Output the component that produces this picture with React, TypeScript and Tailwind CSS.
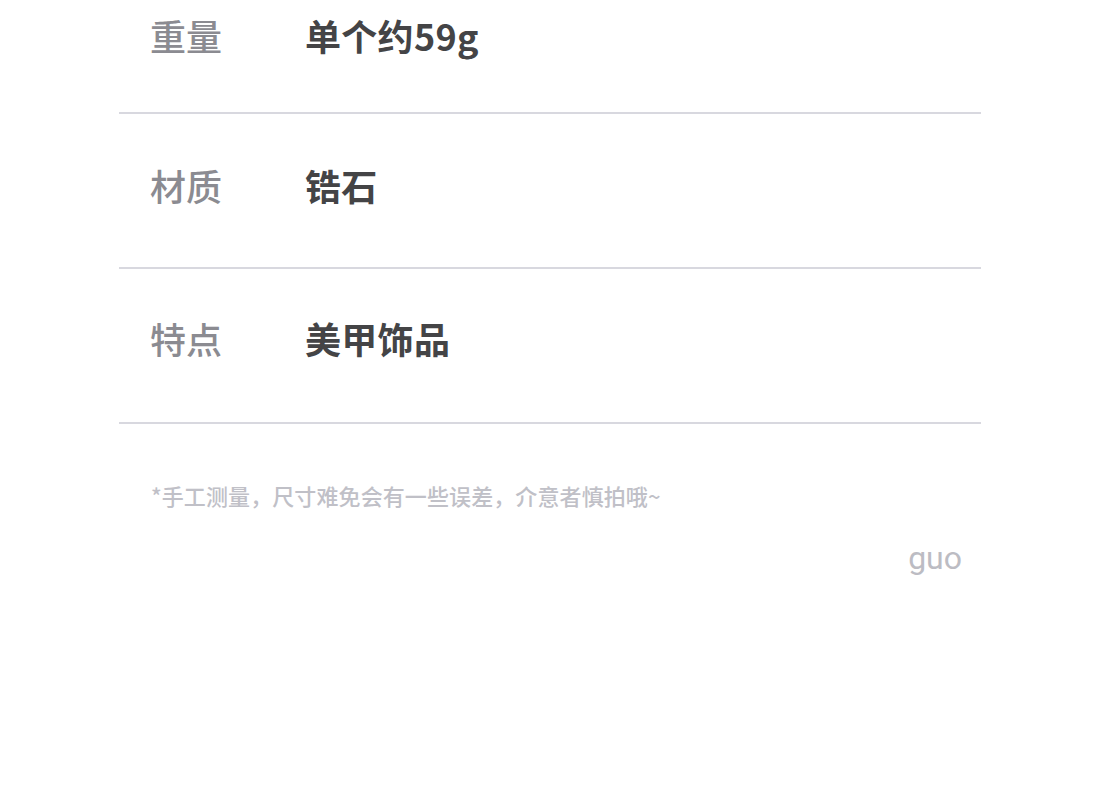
import React from "react";

const rows = [
  { label: "重量", value: "单个约59g", pad: "pt-[58px]" },
  { label: "材质", value: "锆石", pad: "pt-[53px]" },
  { label: "特点", value: "美甲饰品", pad: "pt-[51px]" },
];

export default function App() {
  return (
    <div
      className="w-[1100px] h-[809px] bg-white overflow-hidden"
      style={{ fontFamily: '"Noto Sans CJK SC", "Noto Sans", sans-serif' }}
    >
      <div className="ml-[119px] w-[862px] -mt-[41px]">
        {rows.map((r) => (
          <div
            key={r.label}
            className={`h-[155px] flex items-start border-b-2 border-[#d8d8df] ${r.pad}`}
          >
            <div className="pl-[31px] w-[186px] text-[36px] font-medium text-[#8b8b91] leading-none">
              {r.label}
            </div>
            <div className="text-[36px] font-bold text-[#444446] leading-none tracking-[0.3px]">
              {r.value}
            </div>
          </div>
        ))}
        <div className="pl-[32px] mt-[56px] text-[22px] leading-[30px] font-medium text-[#c0c0c7] tracking-[0.1px]">
          *手工测量，尺寸难免会有一些误差，介意者慎拍哦~
        </div>
        <div
          className="flex justify-end pr-[19px] mt-[30px] text-[32px] leading-[36px] text-[#bcbcc3]"
          style={{ fontFamily: 'Roboto, "Noto Sans", sans-serif' }}
        >
          guo
        </div>
      </div>
    </div>
  );
}
